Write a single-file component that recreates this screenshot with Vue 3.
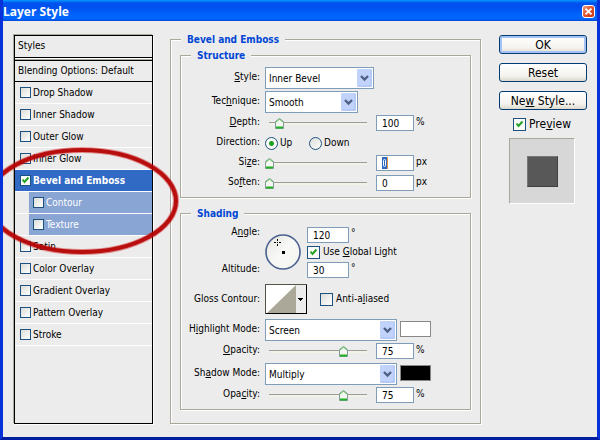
<script setup>
import { reactive } from 'vue'

const effects = reactive([
  { name: 'Drop Shadow', on: false },
  { name: 'Inner Shadow', on: false },
  { name: 'Outer Glow', on: false },
  { name: 'Inner Glow', on: false },
  { name: 'Bevel and Emboss', on: true, selected: true },
  { name: 'Contour', on: false, sub: true },
  { name: 'Texture', on: false, sub: true },
  { name: 'Satin', on: false },
  { name: 'Color Overlay', on: false },
  { name: 'Gradient Overlay', on: false },
  { name: 'Pattern Overlay', on: false },
  { name: 'Stroke', on: false },
])

const form = reactive({
  style: 'Inner Bevel',
  technique: 'Smooth',
  depth: 100,
  direction: 'up',
  size: 0,
  soften: 0,
  angle: 120,
  altitude: 30,
  globalLight: true,
  antiAliased: false,
  highlight: 'Screen',
  highlightOpacity: 75,
  shadow: 'Multiply',
  shadowOpacity: 75,
  preview: true,
})
</script>

<template>
  <div class="window">
    <header class="titlebar">
      <h1>Layer Style</h1>
      <button class="close" type="button" aria-label="Close">
        <svg width="13" height="13" viewBox="0 0 13 13">
          <path d="M3 3l7 7M10 3l-7 7" stroke="#fff" stroke-width="2.2" />
        </svg>
      </button>
    </header>

    <main class="content">
      <nav class="styles">
        <div class="head first">Styles</div>
        <div class="head">Blending Options: Default</div>
        <ul>
          <li v-for="e in effects" :key="e.name" :class="{ selected: e.selected, sub: e.sub }">
            <label><input v-model="e.on" type="checkbox" class="tick" />{{ e.name }}</label>
          </li>
        </ul>
      </nav>

      <fieldset class="group outer">
        <legend>Bevel and Emboss</legend>

        <fieldset class="group structure">
          <legend>Structure</legend>
          <div class="row">
            <label class="name" for="style"><u>S</u>tyle:</label>
            <span class="combo w-style">
              <select id="style" v-model="form.style"><option>Inner Bevel</option></select>
              <svg width="15" height="18" viewBox="0 0 15 18"><rect width="15" height="18" rx="1" fill="#c1d3fb" /><path d="M1 17h13V1" fill="none" stroke="#a9c0f2" /><path d="M4 7l3.5 3.5L11 7" fill="none" stroke="#4d6185" stroke-width="2.4" /></svg>
            </span>
          </div>
          <div class="row">
            <label class="name" for="technique">Tec<u>h</u>nique:</label>
            <span class="combo w-technique">
              <select id="technique" v-model="form.technique"><option>Smooth</option></select>
              <svg width="15" height="18" viewBox="0 0 15 18"><rect width="15" height="18" rx="1" fill="#c1d3fb" /><path d="M1 17h13V1" fill="none" stroke="#a9c0f2" /><path d="M4 7l3.5 3.5L11 7" fill="none" stroke="#4d6185" stroke-width="2.4" /></svg>
            </span>
          </div>
          <div class="row slim">
            <label class="name" for="depth"><u>D</u>epth:</label>
            <input v-model="form.depth" type="range" min="1" max="1000" aria-label="Depth slider" />
            <input id="depth" v-model="form.depth" class="num" type="text" />
            <span class="unit">%</span>
          </div>
          <div class="row slim">
            <span class="name">Direction:</span>
            <label class="radio"><input v-model="form.direction" type="radio" value="up" />Up</label>
            <label class="radio"><input v-model="form.direction" type="radio" value="down" />Down</label>
          </div>
          <div class="row slim">
            <label class="name" for="size">Si<u>z</u>e:</label>
            <input v-model="form.size" type="range" min="0" max="250" aria-label="Size slider" />
            <span class="field">
              <input id="size" v-model="form.size" class="num active" type="text" />
              <svg class="marked" width="7" height="12" viewBox="0 0 7 12"><rect width="6" height="12" fill="#316ac5" /><rect x="5" width="1" height="12" fill="#e8963c" /><rect x="1.5" y="2.5" width="2" height="7" rx="1" fill="none" stroke="#fff" /></svg>
            </span>
            <span class="unit">px</span>
          </div>
          <div class="row slim">
            <label class="name" for="soften">So<u>f</u>ten:</label>
            <input v-model="form.soften" type="range" min="0" max="16" aria-label="Soften slider" />
            <input id="soften" v-model="form.soften" class="num" type="text" />
            <span class="unit">px</span>
          </div>
        </fieldset>

        <fieldset class="group shading">
          <legend>Shading</legend>
          <div class="light">
            <div class="light-names">
              <label class="name" for="angle">A<u>n</u>gle:</label>
              <label class="name" for="altitude">Altitude:</label>
            </div>
            <svg class="dial" width="36" height="36" viewBox="0 0 36 36">
              <defs>
                <linearGradient id="dialFill" x1="0" y1="0" x2="1" y2="1">
                  <stop offset="0" stop-color="#e4e4e0" /><stop offset=".5" stop-color="#f8f8f6" /><stop offset="1" stop-color="#f4f4f0" />
                </linearGradient>
              </defs>
              <circle cx="18" cy="18" r="17" fill="url(#dialFill)" stroke="#4a618f" stroke-width="1.6" />
              <path d="M9 8.500h2M14 8.500h2M12.500 5v2M12.500 10v2M12 8.500h1" stroke="#000" />
              <rect x="17" y="17" width="3" height="3" />
            </svg>
            <div class="light-fields">
              <span class="pair"><input id="angle" v-model="form.angle" class="num wide" type="text" /><span class="unit">°</span></span>
              <label class="check"><input v-model="form.globalLight" type="checkbox" class="tick" /><span>Use <u>G</u>lobal Light</span></label>
              <span class="pair"><input id="altitude" v-model="form.altitude" class="num wide" type="text" /><span class="unit">°</span></span>
            </div>
          </div>
          <div class="row gloss">
            <span class="name">Gloss Contour:</span>
            <button class="contour" type="button" aria-label="Gloss Contour">
              <svg width="42" height="30" viewBox="0 0 42 30">
                <rect width="42" height="30" fill="#000" />
                <rect x="1" y="1" width="30" height="28" fill="#fff" />
                <path d="M2 29L31 1v28z" fill="#aca899" />
                <rect x="31" y="1" width="10" height="28" fill="#ececec" />
                <path d="M33 14h5v1h-1v1h-1v1h-1v-1h-1v-1h-1z" />
                <path d="M0 .5h42M.5 0v30" stroke="#55524a" />
              </svg>
            </button>
            <label class="check aliased"><input v-model="form.antiAliased" type="checkbox" class="tick" /><span>Anti-a<u>l</u>iased</span></label>
          </div>
          <div class="row">
            <label class="name" for="highlight">H<u>i</u>ghlight Mode:</label>
            <span class="combo w-mode">
              <select id="highlight" v-model="form.highlight"><option>Screen</option></select>
              <svg width="15" height="18" viewBox="0 0 15 18"><rect width="15" height="18" rx="1" fill="#c1d3fb" /><path d="M1 17h13V1" fill="none" stroke="#a9c0f2" /><path d="M4 7l3.500 3.500L11 7" fill="none" stroke="#4d6185" stroke-width="2.4" /></svg>
            </span>
            <button class="swatch white" type="button" aria-label="Highlight color"></button>
          </div>
          <div class="row slim">
            <label class="name" for="hop"><u>O</u>pacity:</label>
            <input v-model="form.highlightOpacity" type="range" min="0" max="100" aria-label="Highlight opacity slider" />
            <input id="hop" v-model="form.highlightOpacity" class="num" type="text" />
            <span class="unit">%</span>
          </div>
          <div class="row">
            <label class="name" for="shadow">Sh<u>a</u>dow Mode:</label>
            <span class="combo w-mode">
              <select id="shadow" v-model="form.shadow"><option>Multiply</option></select>
              <svg width="15" height="18" viewBox="0 0 15 18"><rect width="15" height="18" rx="1" fill="#c1d3fb" /><path d="M1 17h13V1" fill="none" stroke="#a9c0f2" /><path d="M4 7l3.500 3.500L11 7" fill="none" stroke="#4d6185" stroke-width="2.4" /></svg>
            </span>
            <button class="swatch black" type="button" aria-label="Shadow color"></button>
          </div>
          <div class="row slim">
            <label class="name" for="sop">Opa<u>c</u>ity:</label>
            <input v-model="form.shadowOpacity" type="range" min="0" max="100" aria-label="Shadow opacity slider" />
            <input id="sop" v-model="form.shadowOpacity" class="num" type="text" />
            <span class="unit">%</span>
          </div>
        </fieldset>
      </fieldset>

      <aside class="actions">
        <button class="push default" type="button">OK</button>
        <button class="push" type="button">Reset</button>
        <button class="push" type="button"><span>Ne<u>w</u> Style...</span></button>
        <label class="check preview"><input v-model="form.preview" type="checkbox" class="tick" /><span>Pre<u>v</u>iew</span></label>
        <div class="sample"><div class="chip"></div></div>
      </aside>
    </main>

    <svg class="marker" width="180" height="112" viewBox="0 0 180 112">
      <ellipse cx="82" cy="56" rx="94" ry="51" fill="none" stroke="#c00" stroke-opacity=".4" stroke-width="6" />
      <ellipse cx="82" cy="56" rx="94" ry="51" fill="none" stroke="#b40000" stroke-opacity=".9" stroke-width="4" />
    </svg>
  </div>
</template>

<style>
body {
  margin: 0;
}
</style>

<style scoped>
* {
  box-sizing: border-box;
}
.window {
  position: relative;
  display: flex;
  flex-direction: column;
  min-height: 100vh;
  overflow: hidden;
  background: #ececec;
  border: solid #0831d9;
  border-width: 0 3px 3px;
  border-bottom-color: #001ea0;
  color: #000;
  font: 10px/12px "DejaVu Sans Condensed", "DejaVu Sans", sans-serif;
}
.titlebar {
  display: flex;
  align-items: center;
  justify-content: space-between;
  height: 21px;
  margin: 0 -3px;
  padding: 2px 5px 0 3px;
  background: linear-gradient(#0997ff 0, #0053ee 3px, #0050ee 7px, #06f 16px, #06f 19px, #0144d0 21px);
}
h1 {
  margin: 0;
  color: #fff;
  font: bold 12px/16px "Open Sans", sans-serif;
}
.close {
  display: flex;
  padding: 0;
  border: 1px solid #fff;
  border-radius: 3px;
  background: linear-gradient(135deg, #f0a080, #e0502c 50%, #c8380c);
}
.close svg {
  width: 11px;
  height: 11px;
}
.content {
  display: grid;
  flex: 1;
  grid-template-columns: 139px minmax(0, 1fr) 88px;
  column-gap: 17px;
  padding: 13px 10px 13px 11px;
}
.styles {
  border: 1px solid #000;
  margin-top: 1px;
  box-shadow: -1px -1px 0 #aca899, 1px 1px 0 #fff;
}
.head {
  height: 22px;
  padding: 4px 3px;
  border-bottom: 1px solid #000;
}
.head.first {
  box-shadow: 0 1px 0 #fff, 0 2px 0 #aca899;
  margin-bottom: 2px;
}
.head + .head {
  border-top: 1px solid #000;
}
ul {
  margin: 0;
  padding: 0;
  list-style: none;
}
li {
  border-bottom: 1px solid #fff;
}
li label {
  display: flex;
  align-items: center;
  gap: 2px;
  height: 21px;
  padding-left: 5px;
}
li.selected {
  background: #316ac5;
  color: #fff;
  font-weight: bold;
}
li.sub label {
  margin-left: 14px;
  padding-left: 4px;
  background: #89a5d3;
  color: #fff;
}
.tick {
  appearance: none;
  flex: none;
  width: 11px;
  height: 11px;
  margin: 0;
  border: 1px solid #1c5180;
  background: linear-gradient(135deg, #dcdcd7, #fff);
}
.check .tick {
  width: 13px;
  height: 13px;
}
.tick:checked {
  background: url("data:image/svg+xml,%3Csvg xmlns='http://www.w3.org/2000/svg' viewBox='0 0 9 9'%3E%3Cpath d='M1.500 3.500l2 2.500 4-4.500' fill='none' stroke='%2321a121' stroke-width='2'/%3E%3C/svg%3E") center / 9px 9px no-repeat #fbfbfa;
}
.group {
  min-width: 0;
  margin: 0;
  border: 1px solid #aca899;
  box-shadow: inset 1px 1px 0 #fff, 1px 1px 0 #fff;
}
.outer {
  margin-right: 1px;
  padding: 5px 9px 13px;
}
.structure {
  padding: 6px 0 4px;
  margin-bottom: 10px;
}
.shading {
  padding: 7px 0 4px;
}
legend {
  margin-left: 10px;
  padding: 0 6px;
  background: #ececec;
  color: #0046d5;
  font-weight: bold;
  line-height: 11px;
}
.outer > legend {
  margin-left: 1px;
}
.row {
  display: flex;
  align-items: center;
  margin-bottom: 2px;
}
.slim {
  height: 16px;
  margin-bottom: 4px;
}
.slim:last-child {
  margin-bottom: 2px;
}
.name {
  flex: none;
  width: 84px;
  padding: 0 5px 3px 0;
  text-align: right;
}
u {
  text-underline-offset: 1px;
}
.combo {
  display: grid;
  align-items: center;
}
.combo > * {
  grid-area: 1 / 1;
}
.combo svg {
  justify-self: end;
  margin-right: 2px;
  pointer-events: none;
}
.w-style {
  width: 109px;
}
.w-technique {
  width: 93px;
}
.w-mode {
  width: 132px;
}
select {
  appearance: none;
  width: 100%;
  height: 22px;
  margin: 0;
  padding: 1px 3px 0;
  border: 1px solid #7f9db9;
  border-radius: 0;
  background: #fff;
  color: #000;
  font: inherit;
}
.num {
  width: 38px;
  height: 16px;
  padding: 1px 5px 0;
  border: 1px solid #7f9db9;
  background: #fff;
  color: #000;
  font: inherit;
}
.num.wide {
  width: 42px;
}
.field {
  display: grid;
  align-items: center;
}
.field > * {
  grid-area: 1 / 1;
}
.num.active {
  color: transparent;
}
.marked {
  margin-left: 6px;
  pointer-events: none;
}
.unit {
  padding: 0 0 3px 2px;
}
input[type="range"] {
  appearance: none;
  flex: none;
  width: 107px;
  height: 11px;
  margin: 0 4px 0 0;
  background: linear-gradient(#9d9c99 1px, #f3f2e8 1px) 4px 4px / 98px 3px no-repeat;
}
input[type="range"]::-webkit-slider-thumb {
  appearance: none;
  width: 9px;
  height: 11px;
  background: url("data:image/svg+xml,%3Csvg xmlns='http://www.w3.org/2000/svg' viewBox='0 0 9 11'%3E%3Cpath d='M.5 10.500v-7l4-3 4 3v7z' fill='%23f5f5f1' stroke='%23879a9b'/%3E%3Cpath d='M1 4l3.500-2.800L8 4' fill='none' stroke='%234fc04f'/%3E%3Cpath d='M1 9.500h7' stroke='%2321b121' stroke-width='2'/%3E%3C/svg%3E") center / 9px 11px no-repeat;
}
.radio {
  display: flex;
  align-items: center;
  gap: 2px;
  width: 44px;
}
.radio input {
  appearance: none;
  flex: none;
  width: 13px;
  height: 13px;
  margin: 0;
  border: 1px solid #1c5180;
  border-radius: 50%;
  background: linear-gradient(135deg, #dcdcd7, #fff);
}
.radio input:checked {
  background: radial-gradient(circle, #21a121 2px, #f8f8f6 3px);
}
.light {
  display: flex;
  align-items: center;
  margin-bottom: 6px;
}
.light-names {
  display: grid;
  gap: 22px;
}
.dial {
  margin-right: 6px;
}
.light-fields {
  display: grid;
  gap: 3px;
}
.pair {
  display: flex;
}
.check {
  display: flex;
  align-items: center;
  gap: 3px;
}
.gloss {
  margin-bottom: 5px;
}
.gloss .name {
  padding-bottom: 0;
}
.contour {
  display: flex;
  padding: 0;
  border: 0;
}
.aliased {
  margin-left: 13px;
}
.swatch {
  width: 31px;
  height: 16px;
  margin: 0 0 3px 3px;
  padding: 0;
  border: 1px solid #888;
}
.white {
  background: #fff;
}
.black {
  background: #000;
}
.actions {
  display: flex;
  flex-direction: column;
  gap: 9px;
  padding-top: 1px;
  font: 12px/14px "DejaVu Sans Condensed", sans-serif;
}
.push {
  height: 19px;
  padding: 0;
  border: 1px solid #003c74;
  border-radius: 3px;
  background: linear-gradient(#fff, #f4f3ee 70%, #dcd8cc);
  color: #000;
  font: inherit;
}
.default {
  box-shadow: inset 0 0 0 2px #a6c2f4;
}
.preview {
  justify-content: center;
  margin: -2px 2px -2px 0;
}
.sample {
  display: grid;
  place-items: center;
  align-self: center;
  width: 66px;
  height: 66px;
  margin-right: 2px;
  border: 1px solid #fff;
  border-top-color: #aca899;
  border-left-color: #aca899;
  background: #d7d7d7;
}
.chip {
  width: 31px;
  height: 31px;
  border: 1px solid #404040;
  border-top-color: #777;
  border-left-color: #777;
  background: #585858;
}
.marker {
  position: absolute;
  top: 145px;
  left: -3px;
  pointer-events: none;
}
</style>
